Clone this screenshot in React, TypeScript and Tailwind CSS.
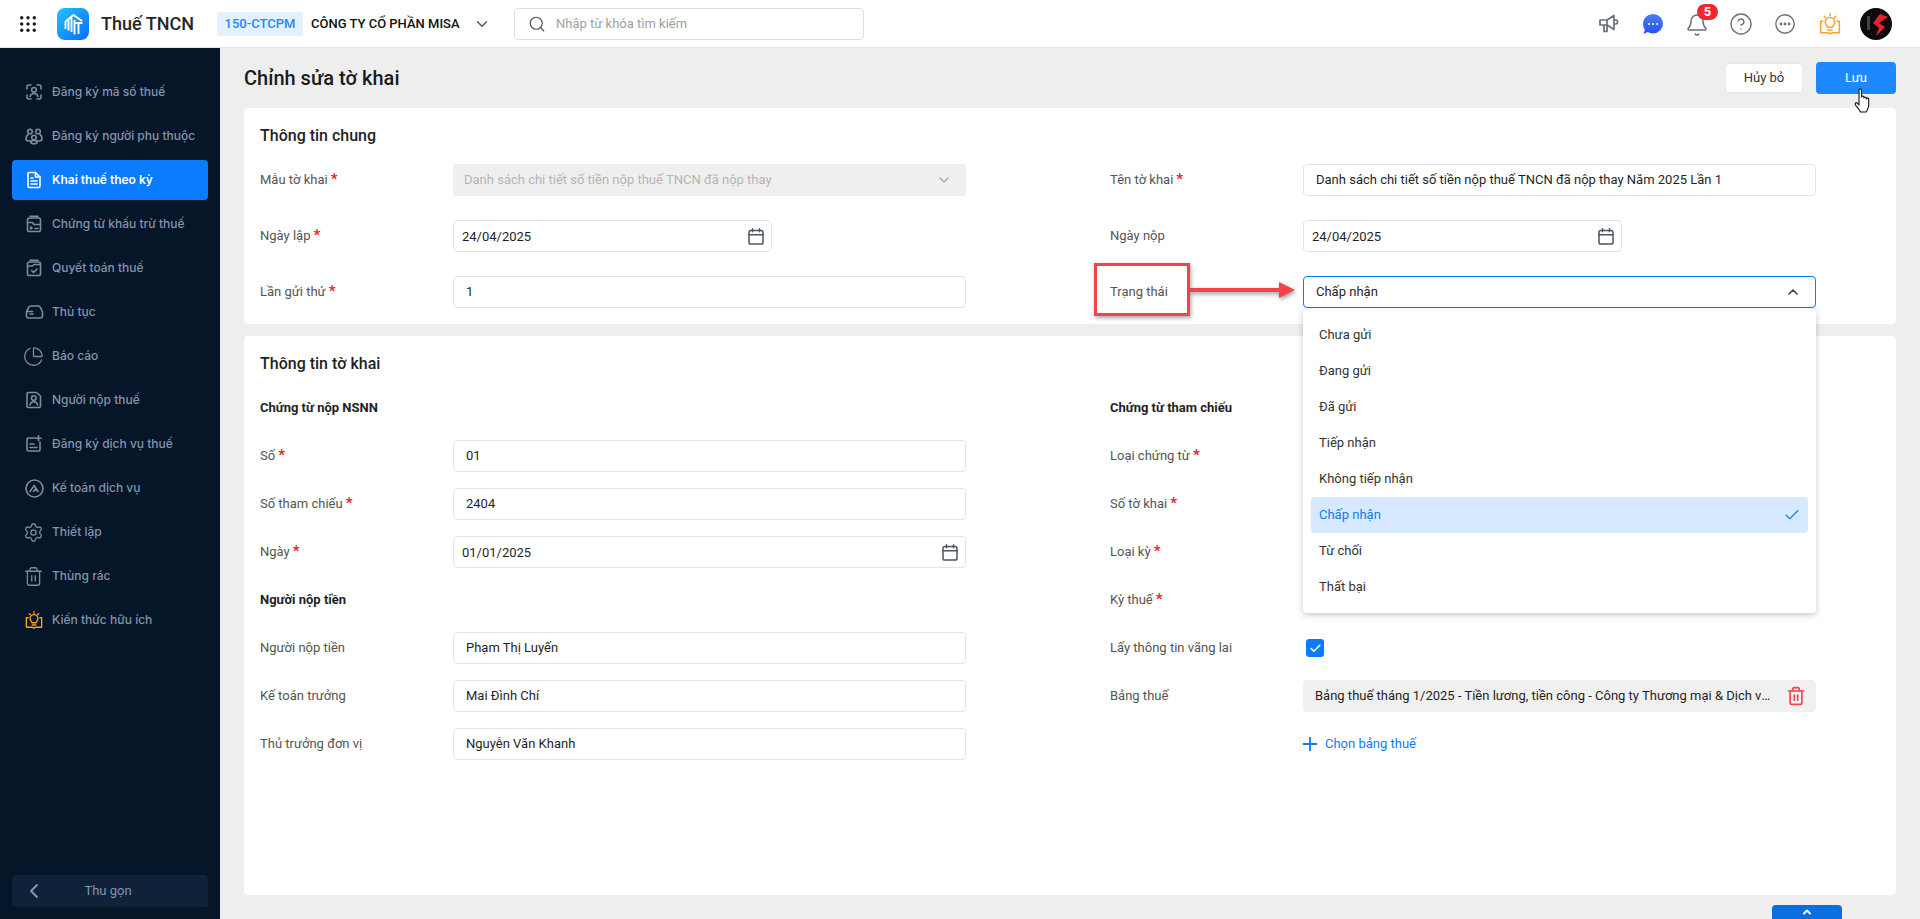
import React from "react";
import { ChartPie, Settings, Trash2, ChevronDown, ChevronUp, ChevronLeft, Search, Check, Plus, CircleHelp, Bell } from "lucide-react";

const sv = { width: 18, height: 18, viewBox: "0 0 18 18", fill: "none", stroke: "currentColor", strokeWidth: 1.6, strokeLinecap: "round" as const, strokeLinejoin: "round" as const };

const IScan = () => (
  <svg {...sv}>
    <path d="M2 6V3.500A1.500 1.500 0 0 1 3.500 2H6M12 2h2.500A1.500 1.500 0 0 1 16 3.500V6M16 12v2.500a1.500 1.500 0 0 1-1.500 1.500H12M6 16H3.500A1.500 1.500 0 0 1 2 14.500V12" />
    <circle cx="9" cy="6.800" r="2.300" />
    <path d="M5 13.500c.6-2 2.100-3 4-3s3.400 1 4 3" />
  </svg>
);
const IGroup = () => (
  <svg {...sv}>
    <circle cx="5" cy="4.500" r="2.300" />
    <circle cx="13" cy="4.500" r="2.300" />
    <circle cx="9" cy="10.500" r="2.300" />
    <path d="M3 7.500C1.500 8.500 1 10 1 11.500c0 1.500 1 2.500 2.500 2.500h2M15 7.500c1.500 1 2 2.500 2 4 0 1.500-1 2.500-2.500 2.500h-2M6 15.500c0-1.200 1.300-2 3-2s3 .8 3 2c0 .8-1 1.200-3 1.200s-3-.4-3-1.200z" />
  </svg>
);
const IFile = () => (
  <svg {...sv} strokeWidth={1.6}>
    <path d="M4 1.500h6.500L15 6v9a1.500 1.500 0 0 1-1.500 1.500h-9A1.500 1.500 0 0 1 3 15V2.500a1 1 0 0 1 1-1z" />
    <path d="M10.500 1.500V6H15M6 7h2M6 10h6M6 13h6" />
  </svg>
);
const IDocArrow = () => (
  <svg {...sv}>
    <rect x="2.500" y="3" width="13" height="13.500" rx="1.800" />
    <path d="M5 1.200h8M2.500 7.500h5l1.500 2h6.500M5.500 12l1.500 1-1.500 1M10 13.500h3" />
  </svg>
);
const IDocCheck = () => (
  <svg {...sv}>
    <rect x="2.500" y="3" width="13" height="13.500" rx="1.800" />
    <path d="M5 1.200h8M2.500 7h5l1.500-1.500h6.500M6.500 11.500l2 2 3.500-3.500" />
  </svg>
);
const IProc = () => (
  <svg {...sv} width={19} viewBox="0 0 19 18">
    <path d="M1.500 9.500V13a2 2 0 0 0 2 2h12a2 2 0 0 0 2-2V9.500c0-1-.3-1.700-.8-2.500L15.200 4.200A2 2 0 0 0 13.500 3h-8a2 2 0 0 0-1.700 1.200L2.300 7c-.5.800-.8 1.500-.8 2.500zM2 8.500h5.500M5 11h3" />
  </svg>
);
const IPerson = () => (
  <svg {...sv}>
    <path d="M3.500 1.500h8L15.500 5v10a1.500 1.500 0 0 1-1.500 1.500H3.500A1.500 1.500 0 0 1 2 15V3a1.500 1.500 0 0 1 1.500-1.500z" />
    <circle cx="8.800" cy="7" r="2.300" />
    <path d="M5 14c.3-2 1.800-3.200 3.800-3.200s3.500 1.200 3.800 3.200" />
  </svg>
);
const IDocPlus = () => (
  <svg {...sv}>
    <path d="M10 3H3.500A1.500 1.500 0 0 0 2 4.500v10A1.500 1.500 0 0 0 3.500 16h10a1.500 1.500 0 0 0 1.500-1.500V7M13.500 .8v5M11 3.300h5M5 9h4M5 12.500h7" />
  </svg>
);
const ICircleA = () => (
  <svg {...sv} width={19} height={19} viewBox="0 0 19 19">
    <circle cx="9.500" cy="9.500" r="8.500" />
    <path d="M5 12.500l4.200-6 3.800 6-2.500-2.500-2 2.500" />
  </svg>
);
const Bulb = ({ size = 18, sw = 1.5 }: { size?: number; sw?: number }) => (
  <svg width={size} height={size} viewBox="0 0 20 20" fill="none" stroke="#f9a229" strokeWidth={sw} strokeLinecap="round" strokeLinejoin="round">
    <path d="M10 .8v1.600M4.800 3l1 1.200M15.200 3l-1 1.200" />
    <path d="M7.700 13c0-1.200-2-2.300-2-4.800A4.300 4.300 0 0 1 10 4a4.300 4.300 0 0 1 4.300 4.200c0 2.500-2 3.600-2 4.800z" />
    <path d="M3.500 7.500H1.500v10.500h6c1 0 1.800.5 2.500 1 .7-.5 1.500-1 2.500-1h6V7.500h-2M8 15.500h4" />
  </svg>
);

const side: [string, React.ReactNode][] = [
  ["Đăng ký mã số thuế", <IScan />],
  ["Đăng ký người phụ thuộc", <IGroup />],
  ["Khai thuế theo kỳ", <IFile />],
  ["Chứng từ khấu trừ thuế", <IDocArrow />],
  ["Quyết toán thuế", <IDocCheck />],
  ["Thủ tục", <IProc />],
  ["Báo cáo", <ChartPie size={21} strokeWidth={1.5} className="-ml-[2px]" />],
  ["Người nộp thuế", <IPerson />],
  ["Đăng ký dịch vụ thuế", <IDocPlus />],
  ["Kế toán dịch vụ", <ICircleA />],
  ["Thiết lập", <Settings size={21} strokeWidth={1.5} className="-ml-[2px]" />],
  ["Thùng rác", <Trash2 size={21} strokeWidth={1.5} className="-ml-[2px]" />],
  ["Kiến thức hữu ích", <Bulb />],
];

const Cal = () => (
  <svg width="16" height="17" viewBox="0 0 16 17" fill="none" stroke="#4b5563" strokeWidth="1.500" strokeLinecap="round">
    <rect x="1" y="2.500" width="14" height="13.500" rx="1.800" />
    <path d="M1 6.800h14M4.500 .8v3M11.500 .8v3" />
  </svg>
);

const Field = ({ label, req, children }: { label: string; req?: boolean; children?: React.ReactNode }) => (
  <div className="flex items-center h-8">
    <div className="w-[193px] shrink-0 text-[13px] text-[#545454]">
      {label}
      {req && <span className="ml-[3px] text-[15px] leading-[13px] text-[#ee1c25] font-bold">*</span>}
    </div>
    <div className="flex-1 min-w-0">{children}</div>
  </div>
);

const Input = ({ value }: { value: string }) => (
  <div className="h-8 flex items-center px-[12px] border border-[#e3e3e3] rounded bg-white text-[13px] text-[#1f1f1f]">{value}</div>
);

const DateBox = ({ value, full }: { value: string; full?: boolean }) => (
  <div className={`h-8 flex items-center justify-between pl-2 pr-[7px] border border-[#e3e3e3] rounded bg-white text-[13px] text-[#1f1f1f] ${full ? "w-full" : "w-[319px]"}`}>
    <span className="pt-[2px]">{value}</span>
    <Cal />
  </div>
);

const SubHead = ({ children }: { children: React.ReactNode }) => (
  <div className="h-6 flex items-center text-[13px] font-bold text-[#1f1f1f]">{children}</div>
);

const options = ["Chưa gửi", "Đang gửi", "Đã gửi", "Tiếp nhận", "Không tiếp nhận", "Chấp nhận", "Từ chối", "Thất bại"];

export default function App() {
  return (
    <div className="relative h-[919px] w-[1920px] overflow-hidden flex flex-col font-[Roboto,sans-serif] bg-[#eeeeee]">
      <header className="h-[48px] shrink-0 bg-white border-b border-[#e6e6e6] flex items-center pl-5 pr-7">
        <svg width="16" height="16" viewBox="0 0 16 16" fill="#1f1f1f" className="shrink-0">
          {[1.700, 8, 14.300].map((y) => [1.700, 8, 14.300].map((x) => <circle key={`${x}-${y}`} cx={x} cy={y} r="1.700" />))}
        </svg>
        <svg width="32" height="32" viewBox="0 0 32 32" className="ml-[21px] shrink-0">
          <defs>
            <linearGradient id="lg" x1="0" y1="0" x2="1" y2="1">
              <stop offset="0" stopColor="#22c1ff" />
              <stop offset="1" stopColor="#0a6cff" />
            </linearGradient>
          </defs>
          <rect width="32" height="32" rx="8" fill="url(#lg)" />
          <path d="M8.500 13.500L16.500 7l8.500 6M8.500 13.500v7.500M11.500 11.500v11M14.500 9.500v14.500M17.500 12v14.500M18 15h7.500M21.500 15v11" fill="none" stroke="#fff" strokeWidth="1.900" />
        </svg>
        <span className="ml-3 w-[116px] shrink-0 text-[18px] font-medium text-[#262626] whitespace-nowrap">Thuế TNCN</span>
        <span className="w-[86px] shrink-0 h-6 rounded bg-[#e3f0ff] text-[#1e88ff] text-[13px] font-medium flex items-center justify-center">150-CTCPM</span>
        <span className="ml-2 w-[162px] shrink-0 text-[13px] font-medium text-[#111] whitespace-nowrap">CÔNG TY CỔ PHẦN MISA</span>
        <ChevronDown size={18} strokeWidth={2} className="text-[#595959] shrink-0" />
        <div className="ml-[23px] w-[350px] h-8 border border-[#dedede] rounded flex items-center pl-[13px] shrink-0">
          <Search size={18} strokeWidth={1.600} className="text-[#555]" />
          <span className="ml-[10px] text-[13px] text-[#a0a0a0]">Nhập từ khóa tìm kiếm</span>
        </div>
        <div className="ml-auto flex items-center gap-[24px] text-[#6b7075]">
          <svg width="20" height="20" viewBox="0 0 20 20" fill="none" stroke="currentColor" strokeWidth="1.700" strokeLinejoin="round" strokeLinecap="round">
            <path d="M1 6h7l7-4.500v14L8 11H1zM5 11v6.500h3V11M8 6v5M15 6h2c.8 0 1.500.7 1.500 1.500v1c0 .8-.7 1.500-1.500 1.500h-2" />
          </svg>
          <svg width="20" height="20" viewBox="0 0 20 20">
            <defs>
              <linearGradient id="ch" x1="0" y1="0" x2="0" y2="1">
                <stop offset="0" stopColor="#4d7ff0" />
                <stop offset="1" stopColor="#2250f5" />
              </linearGradient>
            </defs>
            <path d="M10 0a10 9.700 0 0 1 0 19.400c-2 0-3.800-.4-5.200-1.300L.5 20l1.400-4.200A9.500 9.500 0 0 1 0 9.700 10 9.700 0 0 1 10 0z" fill="url(#ch)" />
            <circle cx="6" cy="10" r="1" fill="#fff" /><circle cx="10" cy="10" r="1" fill="#fff" /><circle cx="14" cy="10" r="1" fill="#fff" />
          </svg>
          <div className="relative w-5 h-5">
            <Bell size={24} strokeWidth={1.500} className="-ml-[2px] -mt-[1px]" />
            <span className="absolute left-[10px] -top-[10px] w-[21px] h-[16px] rounded-full bg-[#f2262e] text-white text-[13px] font-bold flex items-center justify-center">5</span>
          </div>
          <CircleHelp size={24} strokeWidth={1.400} className="-mx-[2px]" />
          <svg width="20" height="20" viewBox="0 0 20 20" fill="none" stroke="currentColor" strokeWidth="1.400">
            <circle cx="10" cy="10" r="9.200" />
            <circle cx="6" cy="10" r=".7" fill="currentColor" /><circle cx="10" cy="10" r=".7" fill="currentColor" /><circle cx="14" cy="10" r=".7" fill="currentColor" />
          </svg>
          <Bulb size={22} sw={1.400} />
          <svg width="32" height="32" viewBox="0 0 32 32" className="-ml-[5px]">
            <circle cx="16" cy="16" r="16" fill="#0b0b0b" />
            <path d="M20 6l8 3-9 6 6 4-9 9 3-8-6-5z" fill="#e8222a" />
            <rect x="7" y="8" width="3" height="14" fill="#444" />
          </svg>
        </div>
      </header>

      <div className="flex-1 min-h-0 flex">
        <aside className="w-[220px] shrink-0 bg-[#041628] flex flex-col px-3 pt-6 pb-3 font-[Inter,sans-serif]">
          <nav className="flex-1 flex flex-col gap-1">
            {side.map(([t, ic], i) => (
              <div key={t} className={`h-10 flex items-center rounded pl-[13px] text-[12px] font-medium ${i === 2 ? "bg-[#0b7bff] text-white font-semibold" : "text-[#8594ae]"}`}>
                <span className={`w-[27px] shrink-0 ${i === 2 ? "text-white" : "text-[#808a9c]"}`}>{ic}</span>
                <span className="whitespace-nowrap">{t}</span>
              </div>
            ))}
          </nav>
          <div className="h-8 rounded bg-[#10223a] flex items-center text-[#8594ae] text-[13px] font-[Roboto,sans-serif]">
            <ChevronLeft size={24} strokeWidth={2} className="ml-[10px] -mr-[38px]" />
            <span className="flex-1 text-center">Thu gọn</span>
          </div>
        </aside>

        <main className="flex-1 min-w-0 px-6 flex flex-col">
          <div className="h-[60px] shrink-0 flex items-center justify-between">
            <h1 className="text-[20px] font-medium text-[#1a1a1a]">Chỉnh sửa tờ khai</h1>
            <div className="flex items-center gap-[13px]">
              <button className="w-[78px] h-[30px] bg-white rounded border border-[#e9e9e9] text-[13px] text-[#333]">Hủy bỏ</button>
              <button className="w-20 h-8 bg-[#1e88ff] rounded text-[13px] text-white">Lưu</button>
            </div>
          </div>

          <section className="bg-white rounded px-4 pt-4 pb-4 shrink-0">
            <div className="h-6 flex items-center text-[16px] font-medium text-[#1f1f1f]">Thông tin chung</div>
            <div className="mt-4 grid grid-cols-[706px_706px] gap-x-[144px] gap-y-6">
              <Field label="Mẫu tờ khai" req>
                <div className="h-8 rounded bg-[#efefef] flex items-center justify-between pl-[11px] pr-[14px] text-[13px] text-[#b5b5b5]">
                  <span>Danh sách chi tiết số tiền nộp thuế TNCN đã nộp thay</span>
                  <ChevronDown size={16} strokeWidth={2} className="text-[#a8a8a8]" />
                </div>
              </Field>
              <Field label="Tên tờ khai" req>
                <Input value="Danh sách chi tiết số tiền nộp thuế TNCN đã nộp thay Năm 2025 Lần 1" />
              </Field>
              <Field label="Ngày lập" req><DateBox value="24/04/2025" /></Field>
              <Field label="Ngày nộp"><DateBox value="24/04/2025" /></Field>
              <Field label="Lần gửi thứ" req><Input value="1" /></Field>
              <Field label="Trạng thái">
                <div className="relative">
                  <div className="h-8 flex items-center justify-between pl-3 pr-[14px] border border-[#0b7bff] rounded bg-white text-[13px] text-[#1f1f1f]">
                    <span>Chấp nhận</span>
                    <ChevronUp size={16} strokeWidth={2.500} className="text-[#444]" />
                  </div>
                  <div className="absolute z-10 left-0 right-0 top-[33px] bg-white rounded p-2 shadow-[0_2px_6px_rgba(0,0,0,0.22)]">
                    {options.map((o) => (
                      <div key={o} className={`h-9 flex items-center justify-between pl-2 pr-[7px] rounded text-[13px] ${o === "Chấp nhận" ? "bg-[#d7e9ff] text-[#0b7bff]" : "text-[#333]"}`}>
                        <span>{o}</span>
                        {o === "Chấp nhận" && <Check size={18} strokeWidth={1.500} />}
                      </div>
                    ))}
                  </div>
                </div>
              </Field>
            </div>
          </section>

          <section className="mt-3 flex-1 min-h-0 bg-white rounded px-4 pt-[16px]">
            <div className="h-6 flex items-center text-[16px] font-medium text-[#1f1f1f]">Thông tin tờ khai</div>
            <div className="mt-5 grid grid-cols-[706px_706px] gap-x-[144px]">
              <div className="flex flex-col">
                <SubHead>Chứng từ nộp NSNN</SubHead>
                <div className="mt-5 flex flex-col gap-4">
                  <Field label="Số" req><Input value="01" /></Field>
                  <Field label="Số tham chiếu" req><Input value="2404" /></Field>
                  <Field label="Ngày" req><DateBox value="01/01/2025" full /></Field>
                </div>
                <div className="mt-5"><SubHead>Người nộp tiền</SubHead></div>
                <div className="mt-5 flex flex-col gap-4">
                  <Field label="Người nộp tiền"><Input value="Phạm Thị Luyến" /></Field>
                  <Field label="Kế toán trưởng"><Input value="Mai Đình Chí" /></Field>
                  <Field label="Thủ trưởng đơn vị"><Input value="Nguyễn Văn Khanh" /></Field>
                </div>
              </div>
              <div className="flex flex-col">
                <SubHead>Chứng từ tham chiếu</SubHead>
                <div className="mt-5 flex flex-col gap-4">
                  <Field label="Loại chứng từ" req />
                  <Field label="Số tờ khai" req />
                  <Field label="Loại kỳ" req />
                  <Field label="Kỳ thuế" req />
                  <Field label="Lấy thông tin vãng lai">
                    <div className="ml-[3px] w-[18px] h-[18px] rounded-[3px] bg-[#0b7bff] flex items-center justify-center">
                      <Check size={13} strokeWidth={3} className="text-white" />
                    </div>
                  </Field>
                  <Field label="Bảng thuế">
                    <div className="h-8 rounded bg-[#f0f0f0] flex items-center justify-between pl-3 pr-[10px] text-[13px] text-[#1f1f1f]">
                      <span className="truncate w-[456px]">Bảng thuế tháng 1/2025 - Tiền lương, tiền công - Công ty Thương mại & Dịch vụ Hoàng Long</span>
                      <Trash2 size={20} strokeWidth={2} className="text-[#f4444a] shrink-0" />
                    </div>
                  </Field>
                  <Field label="">
                    <div className="flex items-center text-[13px] text-[#0b7bff]">
                      <Plus size={22} strokeWidth={2} className="-ml-[4px] mr-[4px]" />
                      Chọn bảng thuế
                    </div>
                  </Field>
                </div>
              </div>
            </div>
          </section>

          <div className="h-6 shrink-0 flex items-end justify-end pr-[54px]">
            <div className="w-[70px] h-[14px] rounded-t bg-[#0a6fe0] flex items-center justify-center">
              <ChevronUp size={12} strokeWidth={4} className="text-white" />
            </div>
          </div>
        </main>
      </div>

      {/* annotation over the form */}
      <div className="absolute z-20 left-[1094px] top-[263px] w-[96px] h-[53px] border-[3px] border-[#f4444a] shadow-[1px_2px_4px_rgba(0,0,0,0.35)]" />
      <svg width="108" height="24" viewBox="0 0 108 24" className="absolute z-20 left-[1189px] top-[278px] drop-shadow-[1px_2px_2px_rgba(0,0,0,0.4)]">
        <path d="M1 10h89V4l16 8-16 8v-6H1z" fill="#f4444a" />
      </svg>
      {/* pointer over the save button */}
      <svg width="20" height="26" viewBox="0 0 20 26" className="absolute z-30 left-[1853px] top-[88px]" fill="#fff" stroke="#111" strokeWidth="1.100" strokeLinejoin="round">
        <path d="M6 2c0-1.500 2.500-1.500 2.500 0v7c0-1.300 2.400-1.300 2.400 0v1c0-1.300 2.400-1.300 2.400 0v1c0-1.200 2.400-1.200 2.400 0v6c0 3-1.500 5-2.500 7H7.500c-1-2-3-4-5-7-1-1.500.3-3 1.700-2l1.800 2z" />
      </svg>
    </div>
  );
}
